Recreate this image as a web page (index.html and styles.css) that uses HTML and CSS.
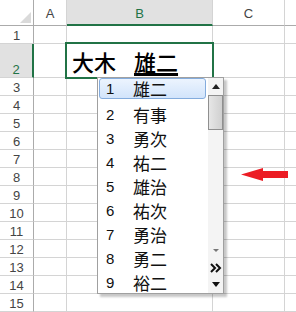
FILE: index.html
```html
<!DOCTYPE html>
<html lang="ja">
<head>
  <meta charset="UTF-8" />
  <title>候補一覧</title>
  <link rel="stylesheet" href="styles.css">
</head>
<body>
  <div class="sheet">
    <!-- 列見出し -->
    <div class="row head">
      <div class="cell corner"><span class="tri"></span></div>
      <div class="cell colhead">A</div>
      <div class="cell colhead sel">B</div>
      <div class="cell colhead">C</div>
      <div class="cell colhead"></div>
    </div>
    <div class="row"><div class="cell rowhead">1</div><div class="cell"></div><div class="cell"></div><div class="cell"></div><div class="cell"></div></div>
    <div class="row r2"><div class="cell rowhead sel">2</div><div class="cell"></div><div class="cell active"><span>大木</span><span class="sp">　</span><span class="ime">雄二</span></div><div class="cell"></div><div class="cell"></div></div>
    <div class="row"><div class="cell rowhead">3</div><div class="cell"></div><div class="cell"></div><div class="cell"></div><div class="cell"></div></div>
    <div class="row"><div class="cell rowhead">4</div><div class="cell"></div><div class="cell"></div><div class="cell"></div><div class="cell"></div></div>
    <div class="row"><div class="cell rowhead">5</div><div class="cell"></div><div class="cell"></div><div class="cell"></div><div class="cell"></div></div>
    <div class="row"><div class="cell rowhead">6</div><div class="cell"></div><div class="cell"></div><div class="cell"></div><div class="cell"></div></div>
    <div class="row"><div class="cell rowhead">7</div><div class="cell"></div><div class="cell"></div><div class="cell"></div><div class="cell"></div></div>
    <div class="row"><div class="cell rowhead">8</div><div class="cell"></div><div class="cell"></div><div class="cell"></div><div class="cell"></div></div>
    <div class="row"><div class="cell rowhead">9</div><div class="cell"></div><div class="cell"></div><div class="cell"></div><div class="cell"></div></div>
    <div class="row"><div class="cell rowhead">10</div><div class="cell"></div><div class="cell"></div><div class="cell"></div><div class="cell"></div></div>
    <div class="row"><div class="cell rowhead">11</div><div class="cell"></div><div class="cell"></div><div class="cell"></div><div class="cell"></div></div>
    <div class="row"><div class="cell rowhead">12</div><div class="cell"></div><div class="cell"></div><div class="cell"></div><div class="cell"></div></div>
    <div class="row"><div class="cell rowhead">13</div><div class="cell"></div><div class="cell"></div><div class="cell"></div><div class="cell"></div></div>
    <div class="row"><div class="cell rowhead">14</div><div class="cell"></div><div class="cell"></div><div class="cell"></div><div class="cell"></div></div>
    <div class="row"><div class="cell rowhead">15</div><div class="cell"></div><div class="cell"></div><div class="cell"></div><div class="cell"></div></div>

    <!-- 変換候補 -->
    <div class="candidates">
      <div class="items">
        <div class="item cur"><span class="num">1</span>雄二</div>
        <div class="item"><span class="num">2</span>有事</div>
        <div class="item"><span class="num">3</span>勇次</div>
        <div class="item"><span class="num">4</span>祐二</div>
        <div class="item"><span class="num">5</span>雄治</div>
        <div class="item"><span class="num">6</span>祐次</div>
        <div class="item"><span class="num">7</span>勇治</div>
        <div class="item"><span class="num">8</span>勇二</div>
        <div class="item"><span class="num">9</span>裕二</div>
      </div>
      <div class="scroll">
        <div class="btn"><svg width="8" height="5" viewBox="0 0 8 5"><polygon points="4,0 8,5 0,5" fill="#222"/></svg></div>
        <div class="thumb"></div>
        <div class="track"></div>
        <div class="btn"><svg width="6" height="3" viewBox="0 0 6 3"><polygon points="0,0 6,0 3,3" fill="#777"/></svg></div>
        <div class="btn"><svg width="12" height="10" viewBox="0 0 12 10"><polyline points="1,1 5,5 1,9" fill="none" stroke="#111" stroke-width="2"/><polyline points="6,1 10,5 6,9" fill="none" stroke="#111" stroke-width="2"/></svg></div>
        <div class="btn"><svg width="8" height="5" viewBox="0 0 8 5"><polygon points="0,0 8,0 4,5" fill="#111"/></svg></div>
      </div>
    </div>

    <svg class="arrow" width="52" height="20" viewBox="0 0 52 20">
      <polygon points="3,9.5 25,3 25,6 50,6 50,13 25,13 25,16" fill="#ec1c24"/>
    </svg>
  </div>
</body>
</html>
```

FILE: styles.css
```css
body {
  margin: 0;
  background: #fff;
  font-family: "Liberation Sans", sans-serif;
}
.sheet {
  position: relative;
  width: 296px;
  height: 312px;
  overflow: hidden;
}
.row {
  display: flex;
  height: 18px;
}
.row.head {
  height: 26px;
}
.row.r2 {
  height: 34px;
}
.cell {
  flex: none;
  box-sizing: border-box;
  border-right: 1px solid #d4d4d4;
  border-bottom: 1px solid #d4d4d4;
}
.cell:nth-child(1) { width: 34px; }
.cell:nth-child(2) { width: 33px; }
.cell:nth-child(3) { width: 146px; }
.cell:nth-child(4) { width: 72px; }
.cell:nth-child(5) { width: 11px; border-right: none; }

.corner {
  display: flex;
  align-items: flex-end;
  justify-content: flex-end;
  padding: 0 2px 2px 0;
  border-bottom-color: #ababab;
  border-right-color: #ababab;
}
.corner .tri {
  width: 0;
  height: 0;
  border-left: 11px solid transparent;
  border-bottom: 11px solid #dadada;
}
.colhead {
  display: flex;
  align-items: center;
  justify-content: center;
  font-size: 13px;
  color: #444;
  padding-top: 2px;
  border-bottom-color: #ababab;
}
.rowhead {
  display: flex;
  align-items: flex-end;
  justify-content: center;
  font-size: 13px;
  line-height: 15px;
  color: #444;
  border-right-color: #ababab;
}
.sel {
  background: #e1e1e1;
  color: #217346;
}
.colhead.sel {
  border-bottom: 2px solid #217346;
}
.rowhead.sel {
  border-right: 2px solid #217346;
}

.active {
  position: relative;
  display: flex;
  align-items: flex-end;
  padding: 0 0 1px 5px;
  font-family: "Noto Sans CJK JP", sans-serif;
  font-size: 22px;
  font-weight: 500;
  line-height: 30px;
  color: #000;
  white-space: pre;
}
.active::after {
  content: "";
  position: absolute;
  left: -2px;
  top: -2px;
  right: -2px;
  bottom: -2px;
  border: 2px solid #217346;
}
.active .sp {
  width: 18px;
}
.ime {
  text-decoration: underline;
  text-decoration-thickness: 3px;
  text-underline-offset: 2px;
}

/* 変換候補ウィンドウ */
.candidates {
  position: absolute;
  left: 97px;
  top: 77px;
  width: 127px;
  height: 217px;
  box-sizing: border-box;
  display: flex;
  background: #fff;
  border: 1px solid #a0a0a0;
  box-shadow: 3px 3px 2px rgba(0,0,0,0.22);
}
.items {
  flex: 1;
  padding: 0 2px 0 1px;
}
.item {
  box-sizing: border-box;
  height: 24px;
  display: flex;
  align-items: center;
  padding-left: 7px;
  font-family: "Noto Sans CJK JP", sans-serif;
  font-size: 17px;
  color: #111;
}
.item .num {
  width: 27px;
  font-family: "Liberation Sans", sans-serif;
  font-size: 15px;
}
.item.cur {
  height: 21px;
  margin-bottom: 3px;
  padding-left: 6px;
  border: 1px solid #84acdd;
  border-radius: 3px;
  background: linear-gradient(#ecf4fe, #d2e4fb);
}
.scroll {
  width: 15px;
  display: flex;
  flex-direction: column;
  background: #f4f4f4;
}
.scroll .btn {
  height: 17px;
  display: flex;
  align-items: center;
  justify-content: center;
}
.thumb {
  height: 35px;
  box-sizing: border-box;
  border: 1px solid #8f8f8f;
  background: linear-gradient(90deg, #e6e6e6, #d0d0d0);
}
.track {
  flex: 1;
}

.arrow {
  position: absolute;
  left: 238px;
  top: 165px;
}
```
